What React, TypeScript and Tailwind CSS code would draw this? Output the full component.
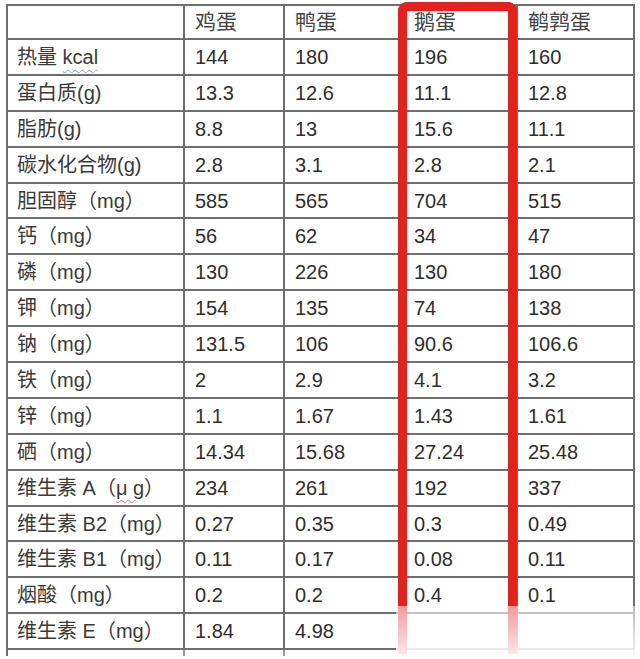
import React from "react";

const header = ["", "鸡蛋", "鸭蛋", "鹅蛋", "鹌鹑蛋"];

type Row = { label: React.ReactNode; v: string[] };

const rows: Row[] = [
  {
    label: (
      <>
        热量{" "}
        <span className="underline decoration-wavy decoration-[#9aa6c4] decoration-1 underline-offset-[5px]">kcal</span>
      </>
    ),
    v: ["144", "180", "196", "160"],
  },
  { label: "蛋白质(g)", v: ["13.3", "12.6", "11.1", "12.8"] },
  { label: "脂肪(g)", v: ["8.8", "13", "15.6", "11.1"] },
  { label: "碳水化合物(g)", v: ["2.8", "3.1", "2.8", "2.1"] },
  { label: "胆固醇（mg）", v: ["585", "565", "704", "515"] },
  { label: "钙（mg）", v: ["56", "62", "34", "47"] },
  { label: "磷（mg）", v: ["130", "226", "130", "180"] },
  { label: "钾（mg）", v: ["154", "135", "74", "138"] },
  { label: "钠（mg）", v: ["131.5", "106", "90.6", "106.6"] },
  { label: "铁（mg）", v: ["2", "2.9", "4.1", "3.2"] },
  { label: "锌（mg）", v: ["1.1", "1.67", "1.43", "1.61"] },
  { label: "硒（mg）", v: ["14.34", "15.68", "27.24", "25.48"] },
  {
    label: (
      <>
        维生素 A（
        <span className="underline decoration-wavy decoration-[#d08a8a] decoration-1 underline-offset-[4px]">μ g</span>）
      </>
    ),
    v: ["234", "261", "192", "337"],
  },
  { label: "维生素 B2（mg）", v: ["0.27", "0.35", "0.3", "0.49"] },
  { label: "维生素 B1（mg）", v: ["0.11", "0.17", "0.08", "0.11"] },
  { label: "烟酸（mg）", v: ["0.2", "0.2", "0.4", "0.1"] },
  { label: "维生素 E（mg）", v: ["1.84", "4.98", "", ""] },
];

const font = {
  fontFamily: '"Liberation Sans", "Noto Sans CJK SC", sans-serif',
};

export default function App() {
  return (
    <div className="relative w-[640px] h-[659px] bg-white overflow-hidden text-[#2e2e2e]" style={font}>
      <div className="pt-[4px] pl-[6px]">
        <div className="grid w-[629px] grid-cols-[177px_100px_119px_114px_117px] grid-rows-[34px_repeat(17,35.9px)_6px] border-l-2 border-t-2 border-[#6e6e6e]">
          {header.map((h, i) => (
            <div
              key={"h" + i}
              className={`flex items-center border-r-2 border-b-2 border-[#6e6e6e] text-[21px] text-[#444] ${i === 0 ? "pl-[9px]" : "pl-[10px]"}`}
            >
              {h}
            </div>
          ))}
          {rows.map((r, ri) => (
            <React.Fragment key={"r" + ri}>
              <div className="flex items-center border-r-2 border-b-2 border-[#6e6e6e] pl-[9px] text-[20px] whitespace-pre text-[#3a3a3a]">
                <span>{r.label}</span>
              </div>
              {r.v.map((v, ci) => (
                <div
                  key={ci}
                  className="flex items-center border-r-2 border-b-2 border-[#6e6e6e] pl-[10px] text-[20px]"
                >
                  {v}
                </div>
              ))}
            </React.Fragment>
          ))}
          {header.map((_, i) => (
            <div key={"t" + i} className="border-r-2 border-[#9a9a9a]" />
          ))}
        </div>
      </div>

      {/* red highlight box */}
      <div className="absolute left-[398px] top-[2px] w-[119px] h-[652px] border-[9px] border-b-0 border-[#e3211d] rounded-t-[9px]" />

      {/* bottom fade */}
      <div className="absolute left-[396px] top-[606px] right-0 bottom-0 bg-linear-to-b from-white/55 to-white/92" />
    </div>
  );
}
